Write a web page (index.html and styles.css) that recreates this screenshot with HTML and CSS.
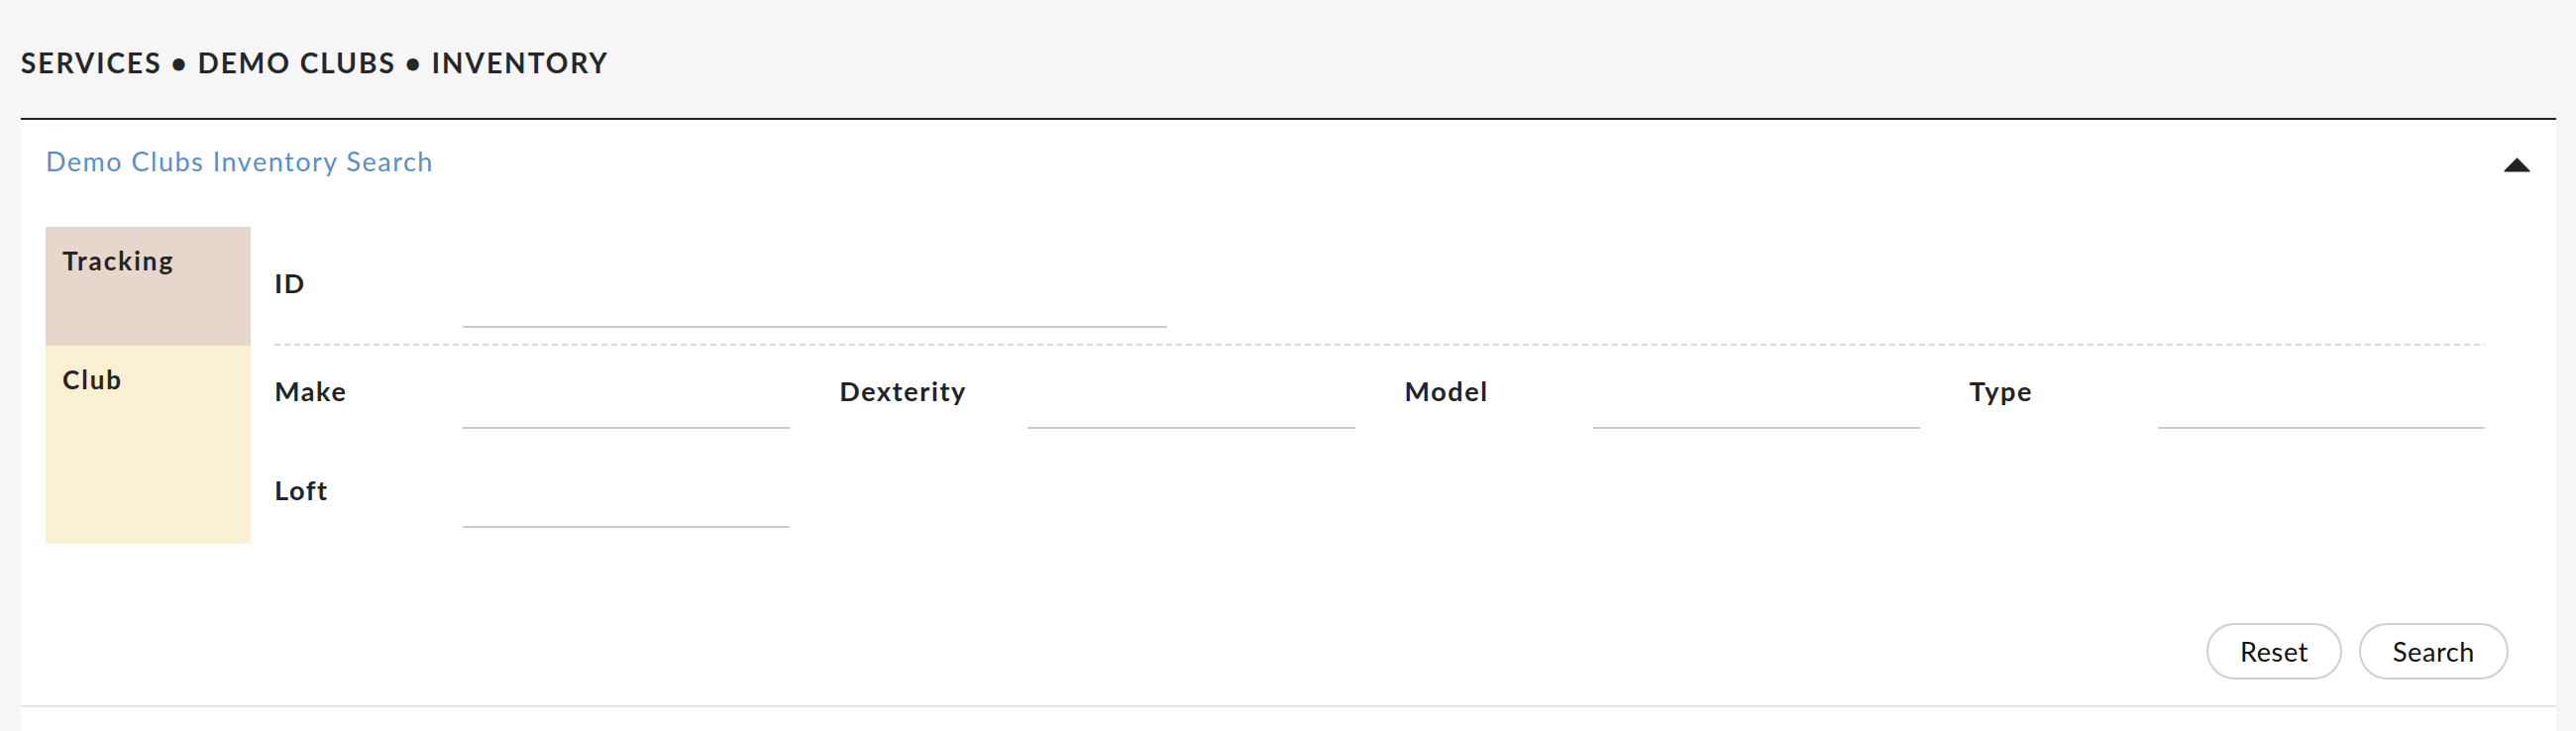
FILE: index.html
```html
<!DOCTYPE html>
<html lang="en">
<head>
<meta charset="utf-8">
<title>Demo Clubs Inventory</title>
<link rel="stylesheet" href="styles.css">
</head>
<body>
<div class="page">
  <header class="page-head">
    <h1 class="crumbs">SERVICES • DEMO CLUBS • INVENTORY</h1>
  </header>
  <section class="panel">
    <div class="panel-head">
      <h2 class="panel-title">Demo Clubs Inventory Search</h2>
      <button class="toggle" type="button" aria-label="Collapse">
        <svg width="27" height="15" viewBox="0 0 27 15"><path d="M13.5 1.2 L25.8 13.8 H1.2 Z" fill="#232326" stroke="#232326" stroke-width="1.6" stroke-linejoin="round"/></svg>
      </button>
    </div>
    <div class="groups">
      <div class="group">
        <div class="group-label group-label--tracking">Tracking</div>
        <div class="rows rows--dashed">
          <div class="row row--tall">
            <div class="field field--id">
              <label class="field-label">ID</label>
              <input class="field-input" type="text">
            </div>
          </div>
        </div>
      </div>
      <div class="group">
        <div class="group-label group-label--club">Club</div>
        <div class="rows">
          <div class="row">
            <div class="field"><label class="field-label">Make</label><input class="field-input" type="text"></div>
            <div class="field"><label class="field-label">Dexterity</label><input class="field-input" type="text"></div>
            <div class="field"><label class="field-label">Model</label><input class="field-input" type="text"></div>
            <div class="field"><label class="field-label">Type</label><input class="field-input" type="text"></div>
          </div>
          <div class="row">
            <div class="field"><label class="field-label">Loft</label><input class="field-input" type="text"></div>
          </div>
        </div>
      </div>
    </div>
    <div class="actions">
      <button class="btn" type="button">Reset</button>
      <button class="btn" type="button">Search</button>
    </div>
  </section>
  <div class="panel-next"></div>
</div>
</body>
</html>
```
FILE: styles.css
```css
* { box-sizing: border-box; }
html, body { margin: 0; padding: 0; }
body {
  background: #f6f6f6;
  font-family: "Lato", "Liberation Sans", sans-serif;
  color: #232326;
}
.page { padding: 0 20px 0 21px; }
.page-head { height: 119px; padding-top: 49px; }
.crumbs {
  margin: 0;
  font-size: 28px;
  line-height: 28px;
  font-weight: 700;
  letter-spacing: 2px;
  color: #25262a;
}
.panel {
  background: #fff;
  border-top: 2px solid #232326;
  border-bottom: 2px solid #e3e3e8;
  padding: 29px 26px 26px 25px;
}
.panel-head {
  display: flex;
  justify-content: space-between;
  align-items: center;
  height: 26px;
}
.panel-title {
  margin: 0;
  font-size: 27px;
  line-height: 26px;
  font-weight: 400;
  letter-spacing: 1.5px;
  color: #5b8fc4;
}
.toggle {
  border: 0;
  background: none;
  padding: 0;
  margin-top: 7px;
  width: 27px;
  height: 15px;
  display: flex;
}
.groups { margin-top: 53px; }
.group { display: flex; }
.group-label {
  width: 207px;
  flex: 0 0 207px;
  padding: 22px 0 0 17px;
  font-size: 26px;
  line-height: 25px;
  font-weight: 700;
  letter-spacing: 2px;
}
.group-label--tracking { background: #e7d6cc; }
.group-label--club { background: #faf0d3; }
.rows {
  flex: 1;
  margin: 0 46px 0 24px;
}
.rows--dashed {
  background: repeating-linear-gradient(to right, #d9d9d9 0 6px, transparent 6px 10px) left bottom / 100% 2px no-repeat;
}
.row {
  display: grid;
  grid-template-columns: repeat(4, 1fr);
  column-gap: 50px;
  height: 100px;
  padding-bottom: 16px;
}
.row--tall { height: 120px; padding-bottom: 18px; }
.field { display: flex; height: 100%; }
.field--id { grid-column: 1 / span 2; }
.field-label {
  width: 190px;
  flex: 0 0 190px;
  padding-top: 33px;
  font-size: 27px;
  line-height: 26px;
  font-weight: 700;
  letter-spacing: 1.6px;
  color: #232326;
}
.row--tall .field-label { padding-top: 44px; }
.field-input {
  flex: 1;
  min-width: 0;
  align-self: flex-end;
  height: 40px;
  border: 0;
  border-bottom: 2px solid #cbcbcb;
  background: transparent;
  outline: none;
  font: inherit;
  font-size: 24px;
}
.field--id .field-input { flex: 0 0 711px; }
.actions {
  display: flex;
  justify-content: flex-end;
  gap: 17px;
  margin-top: 80px;
  padding-right: 22px;
}
.btn {
  height: 57px;
  padding: 0 32px;
  border: 2px solid #cfcfcf;
  border-radius: 30px;
  background: #fff;
  font-family: "Lato", "Liberation Sans", sans-serif;
  font-size: 27px;
  font-weight: 400;
  letter-spacing: 0.6px;
  color: #111;
}
.panel-next { background: #fff; height: 40px; }
```
